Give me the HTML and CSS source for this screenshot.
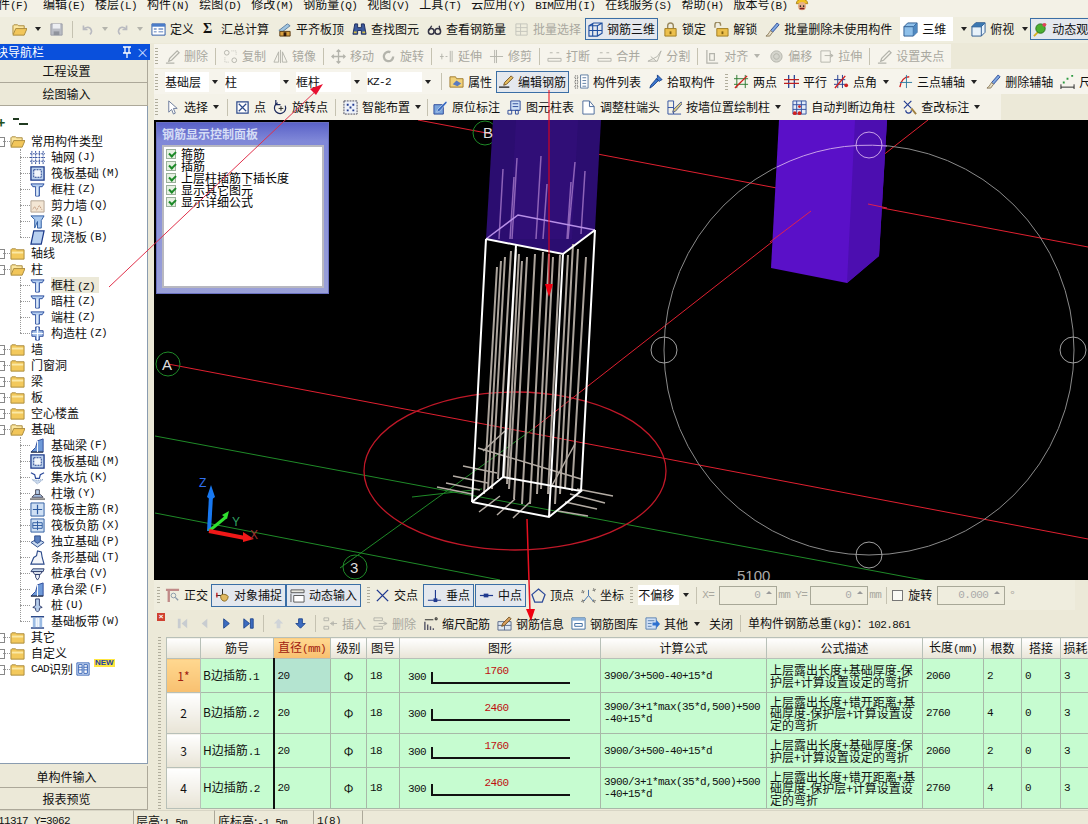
FILE: index.html
```html
<!DOCTYPE html>
<html lang="zh">
<head>
<meta charset="utf-8">
<title>钢筋三维</title>
<link rel="stylesheet" href="styles.css">
</head>
<body>
<svg class="defs" aria-hidden="true">
<symbol id="folder" viewBox="0 0 16 16"><path d="M1 4l1-1h4l1 1h8v10H1z" fill="#f3c95c" stroke="#a98a3c"/><path d="M2 6h12v2H2z" fill="#fbe9a6"/></symbol>
<symbol id="fopen" viewBox="0 0 16 16"><path d="M1 13V4l1-1h4l1 1h6v3" fill="#fbe6a0" stroke="#a98a3c"/><path d="M1 14l3-7h12l-3 7z" fill="#f2c65a" stroke="#a98a3c"/></symbol>
<symbol id="save" viewBox="0 0 16 16"><path d="M2 2h12v12H2z" fill="#b9bcc4" stroke="#9a9da6"/><path d="M4 2h8v5H4z" fill="#eceef2"/><path d="M5 10h6v4H5z" fill="#8f939c"/></symbol>
<symbol id="undo" viewBox="0 0 16 16"><path d="M3 3v5h5M3 8c3-4 9-4 10 2 0 2-1 3-2 4" fill="none" stroke="#b9bac0" stroke-width="2"/></symbol>
<symbol id="redo" viewBox="0 0 16 16"><path d="M13 3v5H8M13 8c-3-4-9-4-10 2 0 2 1 3 2 4" fill="none" stroke="#b9bac0" stroke-width="2"/></symbol>
<symbol id="define" viewBox="0 0 16 16"><path d="M1 2h14v12H1z" fill="#fff" stroke="#2c5aa8"/><path d="M1 2h14v3H1z" fill="#4a7cc8"/><path d="M3 7h3v1H3zM3 10h3v1H3zM8 7h5v1H8zM8 10h5v1H8z" fill="#2c5aa8"/></symbol>
<symbol id="align" viewBox="0 0 16 16"><path d="M2 9l9-7 3 2-9 7z" fill="#9fc4e0" stroke="#5a7ea0"/><path d="M3 10h11v5H3z" fill="#d8a040" stroke="#5a3a10"/><path d="M7 11h3v4H7z" fill="#301808"/></symbol>
<symbol id="binoc" viewBox="0 0 16 16"><path d="M3 2h3v4h4V2h3l2 11h-5V9H6v4H1z" fill="#3c5a9c" stroke="#1c2a5c"/><path d="M2 10h3v2H2zM11 10h3v2h-3z" fill="#d8c040"/></symbol>
<symbol id="glass" viewBox="0 0 16 16"><circle cx="4.5" cy="10" r="3" fill="none" stroke="#334" stroke-width="1.6"/><circle cx="11.5" cy="10" r="3" fill="none" stroke="#334" stroke-width="1.6"/><path d="M2 9l3-5M14 9l-1-5" stroke="#334" stroke-width="1.4"/></symbol>
<symbol id="batch" viewBox="0 0 16 16"><path d="M2 2h12v12H2zM2 6h12M2 10h12M7 2v12" fill="none" stroke="#c4c4bc"/></symbol>
<symbol id="r3d" viewBox="0 0 16 16"><path d="M1 4l5-3h9v11l-5 3H1zM1 4h9v11M10 4l5-3M1 9h14M5 1v14" fill="none" stroke="#1f4fa0" stroke-width="1.2"/></symbol>
<symbol id="lock" viewBox="0 0 16 16"><path d="M5 7V4a3 3 0 0 1 6 0v3" fill="none" stroke="#9a8a60" stroke-width="1.5"/><path d="M2 7h12v8H2z" fill="#ecc04c" stroke="#a07c20"/><path d="M7 10h2v3H7z" fill="#806010"/></symbol>
<symbol id="unlock" viewBox="0 0 16 16"><path d="M1 6V3a3 3 0 0 1 6 0v1" fill="none" stroke="#9a8a60" stroke-width="1.5"/><path d="M3 7h12v8H3z" fill="#ecc04c" stroke="#a07c20"/><path d="M8 10h2v3H8z" fill="#806010"/></symbol>
<symbol id="brush" viewBox="0 0 16 16"><path d="M13 1l2 2-7 8-2-2z" fill="#7fa8e0" stroke="#2c4a9a"/><path d="M6 9l2 2-3 4H1c2-1 3-3 5-6z" fill="#e8e0c8" stroke="#8a7a5a"/></symbol>
<symbol id="cube" viewBox="0 0 16 16"><path d="M1 5l4-4h10v10l-4 4H1z" fill="#8fc0ea" stroke="#2c5a90"/><path d="M1 5h10v10M11 5l4-4" fill="none" stroke="#2c5a90"/><path d="M11 5l4-4v10l-4 4z" fill="#4f88c0"/></symbol>
<symbol id="cube2" viewBox="0 0 16 16"><path d="M1 5l4-4h10v10l-4 4H1z" fill="#e8f2fa" stroke="#2c5a90"/><path d="M1 5h10v10M11 5l4-4M1 5l4-4h10l-4 4z" fill="none" stroke="#2c5a90"/><path d="M1 5l4-4h10l-4 4z" fill="#3c78b0"/></symbol>
<symbol id="dyn" viewBox="0 0 16 16"><path d="M1 15L14 2" stroke="#d8b020" stroke-width="2"/><circle cx="8" cy="7" r="5" fill="#4cb030" stroke="#2c7020"/><circle cx="12" cy="3" r="2" fill="#e04060"/></symbol>
<symbol id="gd" viewBox="0 0 16 16"><path d="M13 2l2 2-8 8-3 1 1-3zM1 15h9" fill="none" stroke="#b4b4ac" stroke-width="1.4"/></symbol>
<symbol id="gcopy" viewBox="0 0 16 16"><circle cx="4" cy="4" r="2.5" fill="none" stroke="#b4b4ac"/><circle cx="12" cy="12" r="2.5" fill="none" stroke="#b4b4ac"/><path d="M9 2l5 0 0 5M2 9v5h5" fill="none" stroke="#c4c4bc" stroke-dasharray="1 1"/></symbol>
<symbol id="gmir" viewBox="0 0 16 16"><path d="M8 1v14M6 3L1 14h5zM10 3l5 11h-5z" fill="none" stroke="#b4b4ac"/></symbol>
<symbol id="gmove" viewBox="0 0 16 16"><path d="M8 1v14M1 8h14M6 3l2-2 2 2M6 13l2 2 2-2M3 6L1 8l2 2M13 6l2 2-2 2" fill="none" stroke="#b4b4ac" stroke-width="1.4"/></symbol>
<symbol id="grot" viewBox="0 0 16 16"><path d="M13 8a5 5 0 1 1-3-4.6" fill="none" stroke="#b4b4ac" stroke-width="2.5"/></symbol>
<symbol id="gext" viewBox="0 0 16 16"><path d="M1 8h4M7 8h2M12 2v12M14 2v12M3 5v6" fill="none" stroke="#b4b4ac"/></symbol>
<symbol id="gtrim" viewBox="0 0 16 16"><path d="M1 8h14M8 1v14M6 1v14" fill="none" stroke="#b4b4ac"/></symbol>
<symbol id="gbrk" viewBox="0 0 16 16"><path d="M3 4h3M10 4h3M1 10h14v3H1z" fill="none" stroke="#b4b4ac"/></symbol>
<symbol id="gsplit" viewBox="0 0 16 16"><path d="M1 13l10-5 4-6M1 13h10l4-11M4 8l6 5" fill="none" stroke="#b4b4ac"/></symbol>
<symbol id="galign" viewBox="0 0 16 16"><path d="M2 1v14h12M5 5h5v7H5z" fill="none" stroke="#b4b4ac" stroke-width="1.3"/></symbol>
<symbol id="goff" viewBox="0 0 16 16"><path d="M8 2a6 6 0 1 1-.1 0zM8 5a3 3 0 1 1-.1 0z" fill="#d4d4cc" stroke="#b4b4ac"/></symbol>
<symbol id="gstr" viewBox="0 0 16 16"><path d="M2 2h10v12H2zM6 7h9M12 5l3 2-3 2" fill="none" stroke="#b4b4ac"/></symbol>
<symbol id="attr" viewBox="0 0 16 16"><path d="M1 3h6l1 2h7v9H1z" fill="#f2d27a" stroke="#a07c30"/><path d="M4 11l4-4 5 3-4 3z" fill="#5a7ac0"/></symbol>
<symbol id="edit" viewBox="0 0 16 16"><path d="M13 2l2 2-7 7-3 1 1-3z" fill="#e8c060" stroke="#705020"/><path d="M0 14h11" stroke="#222" stroke-width="1.4"/></symbol>
<symbol id="list" viewBox="0 0 16 16"><path d="M7 1h8v14H7z" fill="#fff" stroke="#5a7aa0"/><path d="M9 4h4M9 7h4M9 10h4M9 13h4" stroke="#5a7aa0"/><path d="M1 2h3v3H1zM1 7h3v3H1zM1 12h3v3H1z" fill="none" stroke="#555" stroke-dasharray="1 1"/></symbol>
<symbol id="pick" viewBox="0 0 16 16"><path d="M10 1l5 5-2 1-1 1-3-3 1-1zM9 5l2 2-6 6-3 2 1-3z" fill="#3c78d0" stroke="#16408a"/></symbol>
<symbol id="twop" viewBox="0 0 16 16"><path d="M3 1v14M12 1v14M0 5h15M0 11h15" stroke="#2c7a30" fill="none"/><path d="M1 15L14 2" stroke="#d02020" stroke-width="1.5"/></symbol>
<symbol id="para" viewBox="0 0 16 16"><path d="M5 1v14M11 1v14" stroke="#203a90" stroke-width="1.3"/><path d="M0 6h16M0 10h16" stroke="#c02020" stroke-width="1.3"/></symbol>
<symbol id="pang" viewBox="0 0 16 16"><path d="M4 1v14M9 1v14M0 6h12M0 11h12" stroke="#203a90" fill="none"/><path d="M1 15L12 2" stroke="#d02020" stroke-width="1.5"/><circle cx="13" cy="12" r="2" fill="#d02020"/></symbol>
<symbol id="threep" viewBox="0 0 16 16"><path d="M2 14C3 7 7 3 12 3" fill="none" stroke="#d02020" stroke-width="1.5"/><path d="M9 1v14M2 9h13" stroke="#2c7aa0"/></symbol>
<symbol id="dim" viewBox="0 0 16 16"><path d="M1 14h14M1 11v5M15 11v5" stroke="#222"/><path d="M3 8h2v2H3zM7 4h2v2H7zM12 1h2v2h-2z" fill="#2c9a40"/></symbol>
<symbol id="cur" viewBox="0 0 16 16"><path d="M4 1v12l3-3 2 5 2-1-2-5h4z" fill="#fff" stroke="#6a7a9a"/></symbol>
<symbol id="pt" viewBox="0 0 16 16"><path d="M2 2h12v12H2z" fill="#fff" stroke="#2c4a8a" stroke-width="1.3"/><path d="M4 4l8 8M12 4l-8 8" stroke="#2c4a8a" stroke-width="1.3"/></symbol>
<symbol id="rotp" viewBox="0 0 16 16"><path d="M13 6a6 6 0 1 1-8-3" fill="none" stroke="#1c2a5c" stroke-width="1.3"/><path d="M3 0v5h5" fill="none" stroke="#1c2a5c" stroke-width="1.3"/><path d="M6 9h5M8.5 6.500v5" stroke="#222"/></symbol>
<symbol id="smart" viewBox="0 0 16 16"><path d="M1 1h14v14H1z" fill="#eef2f8" stroke="#445" stroke-dasharray="2 1"/><path d="M4 4h2v2H4zM10 4h2v2h-2zM7 7h2v2H7zM4 10h2v2H4zM10 10h2v2h-2z" fill="#203a90"/></symbol>
<symbol id="mark" viewBox="0 0 16 16"><path d="M1 5h10v10H1z" fill="#7aa4dc" stroke="#2c4a9a"/><path d="M14 1l1 2-8 9-3 1 1-3z" fill="#3c6cc0" stroke="#fff" stroke-width=".5"/></symbol>
<symbol id="tab" viewBox="0 0 16 16"><path d="M4 1h10v10H4z" fill="#cfe0f6" stroke="#2c4a9a"/><path d="M6 4h6M6 7h6" stroke="#2c4a9a"/><path d="M1 11h4v4H1zM9 11h3v4H9z" fill="none" stroke="#2c4a9a"/></symbol>
<symbol id="adj" viewBox="0 0 16 16"><path d="M2 1h7l5 6v8H2z" fill="#fff" stroke="#4a6a9a"/><path d="M9 1v6h5" fill="none" stroke="#4a6a9a"/></symbol>
<symbol id="wall" viewBox="0 0 16 16"><path d="M1 1h6v14H1zM1 8h6M7 15h8" fill="none" stroke="#3050a0"/><path d="M15 2l1 2-7 8-3 1 1-3z" fill="#d8c880" stroke="#506090"/></symbol>
<symbol id="corner" viewBox="0 0 16 16"><path d="M1 1h14v14H1zM1 5h14M1 10h14M5 1v14M10 1v14" fill="#e4ecf8" stroke="#3050a0"/><circle cx="3" cy="14" r="2" fill="#d02020"/><circle cx="8" cy="14" r="2" fill="#d02020"/><circle cx="8" cy="7" r="1.500" fill="#d02020"/></symbol>
<symbol id="chk" viewBox="0 0 16 16"><path d="M2 1l8 8M10 1L2 9M4 11a3 3 0 1 0 6 0" fill="none" stroke="#203a90" stroke-width="1.2"/><path d="M10 9l5 6" stroke="#a08040" stroke-width="2"/></symbol>
<symbol id="orth" viewBox="0 0 16 16"><path d="M1 2h14M4 2v13" stroke="#c08a88" stroke-width="2.500" fill="none"/><circle cx="9" cy="8" r="2.500" fill="none" stroke="#8a9aaa"/><path d="M11 10l3 3" stroke="#8a9aaa" stroke-width="1.500"/></symbol>
<symbol id="snap" viewBox="0 0 16 16"><path d="M1 8h12M8 1v8" stroke="#222" fill="none"/><path d="M2 5v5" stroke="#c02020" stroke-width="1.500"/><path d="M6 9c0-3 6-3 8 0 0 3-2 5-4 5s-4-2-4-5z" fill="#e0b860" stroke="#8a6a20"/></symbol>
<symbol id="inp" viewBox="0 0 16 16"><path d="M1 2h14v3H1z" fill="#e8e8e0" stroke="#555"/><path d="M4 8h11v7H4z" fill="#fff" stroke="#555"/><path d="M1 6v9" stroke="#555"/></symbol>
<symbol id="cross" viewBox="0 0 16 16"><path d="M2 2l12 12M14 2L2 14" stroke="#203a90" stroke-width="1.500"/></symbol>
<symbol id="perp" viewBox="0 0 16 16"><path d="M1 13h14M9 2v11" stroke="#203a90" fill="none" stroke-width="1.200"/><path d="M7 11h4v4H7z" fill="#203a90"/></symbol>
<symbol id="mid" viewBox="0 0 16 16"><path d="M1 8h14" stroke="#203a90" stroke-width="1.300"/><path d="M5 6h5v4H5z" fill="#203a90"/></symbol>
<symbol id="vtx" viewBox="0 0 16 16"><path d="M8 1l7 6-3 8H4L1 7z" fill="none" stroke="#2c4a9a" stroke-width="1.300"/></symbol>
<symbol id="crd" viewBox="0 0 16 16"><path d="M3 14L8 8l5 6M8 8V2" fill="none" stroke="#3c70b0"/><path d="M1 3h2v2H1zM13 1h2v2h-2zM1 13h2v2H1zM13 13h2v2h-2z" fill="none" stroke="#333" stroke-dasharray="1 1"/></symbol>
<symbol id="first" viewBox="0 0 16 16"><path d="M3 3h3v10H3zM13 3v10L7 8z" fill="#c8ccd0"/></symbol>
<symbol id="prev" viewBox="0 0 16 16"><path d="M11 3v10L5 8z" fill="#c8ccd0"/></symbol>
<symbol id="next" viewBox="0 0 16 16"><path d="M5 3v10l6-5z" fill="#3c6cc0" stroke="#224a90"/></symbol>
<symbol id="last" viewBox="0 0 16 16"><path d="M3 3v10l6-5zM10 3h3v10h-3z" fill="#3c6cc0" stroke="#224a90"/></symbol>
<symbol id="up" viewBox="0 0 16 16"><path d="M8 3l5 5h-3v5H6V8H3z" fill="#d0d4d8"/></symbol>
<symbol id="down" viewBox="0 0 16 16"><path d="M8 13l5-5h-3V3H6v5H3z" fill="#3c6cc0" stroke="#224a90"/></symbol>
<symbol id="ins" viewBox="0 0 16 16"><path d="M1 2h5v3H1zM1 11h5v3H1zM8 8h7M8 8l3-2v4z" fill="none" stroke="#b4b4ac"/></symbol>
<symbol id="del2" viewBox="0 0 16 16"><path d="M1 2h9v3H1zM1 11h9v3H1zM6 8h9M11 6l4 2-4 2" fill="none" stroke="#b4b4ac"/></symbol>
<symbol id="scale" viewBox="0 0 16 16"><path d="M2 4h9M13 2h2v2h-2z" stroke="#222" fill="none"/><path d="M2 6v9M5 9v6M8 11v4M11 13v2" stroke="#556" stroke-width="1.500"/></symbol>
<symbol id="info" viewBox="0 0 16 16"><path d="M1 6h14v9H1z" fill="#e0e8f0" stroke="#5a6a8a"/><path d="M8 6v9M1 10h14" stroke="#5a6a8a"/><path d="M13 1l2 2-7 7-3 1 1-3z" fill="#d8a060" stroke="#705020"/></symbol>
<symbol id="lib" viewBox="0 0 16 16"><path d="M1 2h14v12H1z" fill="#fff" stroke="#3c6ca0"/><path d="M1 2h14v3H1z" fill="#8ab0d8"/><path d="M4 8h8v3H4z" fill="none" stroke="#3c6ca0"/></symbol>
<symbol id="oth" viewBox="0 0 16 16"><path d="M1 2h11v12H1z" fill="#cfe0f6" stroke="#5a80b0"/><path d="M3 5h7M3 8h4M3 11h4" stroke="#5a80b0"/><path d="M8 7h4V4l4 4.500-4 4.500v-3H8z" fill="#2c70d0"/></symbol>
<symbol id="tgrid" viewBox="0 0 16 16"><path d="M2 1v14M6 1v14M10 1v14M14 1v14M0 4h16M0 8h16M0 12h16" stroke="#2c4a9a" stroke-dasharray="2 1"/></symbol>
<symbol id="traft" viewBox="0 0 16 16"><path d="M1 1h14v14H1z" fill="#bcd2ee" stroke="#1c3a8a" stroke-width="1.400"/><path d="M4 4h8v8H4z" fill="#f2f6fb" stroke="#1c3a8a" stroke-dasharray="2 1"/></symbol>
<symbol id="tcol" viewBox="0 0 16 16"><path d="M1 2h14l-2 3h-3v10H6V5H3z" fill="#b4cef0" stroke="#264a9c"/><path d="M7 5h1v10H7z" fill="#fff"/></symbol>
<symbol id="tshr" viewBox="0 0 16 16"><path d="M1 3h14v12H1z" fill="#f3e6d4" stroke="#b0a090"/><path d="M3 12l2-3 2 4 3-5 3 5" fill="none" stroke="#b08060" stroke-dasharray="1 1"/></symbol>
<symbol id="tbeam" viewBox="0 0 16 16"><path d="M1 2h14l-3 5v8H8V8L5 15V6z" fill="#a8c8ee" stroke="#2c5aa0"/></symbol>
<symbol id="tslab" viewBox="0 0 16 16"><path d="M4 1h11l-3 14H1z" fill="#b8d0f0" stroke="#1c3a8a" stroke-width="1.300"/></symbol>
<symbol id="tgz" viewBox="0 0 16 16"><path d="M6 1h4v4h4v6h-4v4H6v-4H2V5h4z" fill="#a8c4ea" stroke="#2c4a9a"/><path d="M2 8h12M8 1v14" stroke="#fff"/></symbol>
<symbol id="tfb" viewBox="0 0 16 16"><path d="M1 15l5-5 2-7 6-2v14z" fill="#6f9ad8" stroke="#2c4a9a"/><path d="M1 15h13" stroke="#222"/><path d="M8 3v12" stroke="#fff"/></symbol>
<symbol id="tpit" viewBox="0 0 16 16"><path d="M1 3l4 2 1 4h4l1-4 4-2" fill="none" stroke="#2c4a9a" stroke-width="1.300"/><path d="M2 10l6 5 6-5-6 1z" fill="#c8d8ec" stroke="#8aa0c0" stroke-dasharray="1 1"/></symbol>
<symbol id="tdun" viewBox="0 0 16 16"><path d="M0 14h16" stroke="#888" stroke-width="2"/><path d="M2 12h12l-3-3H5z" fill="#a4bee0" stroke="#445"/><path d="M6 9V4h4v5z" fill="#b8d0ec" stroke="#445"/></symbol>
<symbol id="tmain" viewBox="0 0 16 16"><path d="M1 1h14v14H1z" fill="#cfe0f4" stroke="#2c5aa0"/><path d="M8 3v10M3 8h10" stroke="#2c5aa0" stroke-width="1.300"/></symbol>
<symbol id="tneg" viewBox="0 0 16 16"><path d="M1 1h14v14H1z" fill="#cfe0f4" stroke="#2c5aa0"/><path d="M3 5h10v6H3zM8 3v10M3 8h10" fill="none" stroke="#2c5aa0"/></symbol>
<symbol id="tind" viewBox="0 0 16 16"><path d="M1 9l7-4 7 4-7 5z" fill="#c8daf0" stroke="#2c4a8a"/><path d="M5 8V2h6v6l-3 2z" fill="#5a80c0" stroke="#2c4a8a"/></symbol>
<symbol id="tstr" viewBox="0 0 16 16"><path d="M1 15l3-7 3-2 1-5 4 1 1 6 2 7z" fill="#f4f6fa" stroke="#2c4a8a" stroke-width="1.200"/></symbol>
<symbol id="tcap" viewBox="0 0 16 16"><path d="M1 6l2-3h12l-1 3z" fill="#c0d4ec" stroke="#2c3a6a"/><path d="M3 6h10l-2 3H5zM6 9h4v3l-2 3-2-3z" fill="#f0f4fa" stroke="#2c3a6a"/></symbol>
<symbol id="tpile" viewBox="0 0 16 16"><path d="M6 1h4v7l3 2-3 1v2l-2 2-2-2v-2l-3-1 3-2z" fill="#b8cfec" stroke="#2c3a6a"/></symbol>
<symbol id="tband" viewBox="0 0 16 16"><path d="M1 3h14M1 15h14" stroke="#2c4a8a" stroke-width="1.500"/><path d="M3 4h3v10H3zM10 4h3v10h-3z" fill="#9cbce4"/><path d="M7 4h2v10H7z" fill="#dce8f6"/></symbol>
<symbol id="tcad" viewBox="0 0 16 16"><path d="M1 1h14v14H1z" fill="#dce8fa" stroke="#2c5ab0"/><path d="M3 3h4v10H3zM9 3h4v10H9z" fill="#fff" stroke="#2c5ab0"/><path d="M3 6h4M3 9h4M9 6h4M9 9h4" stroke="#2c5ab0"/></symbol>
</svg>

<div class="menu">
<span class="first">文件<span class="m">(F)</span></span><span>编辑<span class="m">(E)</span></span><span>楼层<span class="m">(L)</span></span><span>构件<span class="m">(N)</span></span><span>绘图<span class="m">(D)</span></span><span>修改<span class="m">(M)</span></span><span>钢筋量<span class="m">(Q)</span></span><span>视图<span class="m">(V)</span></span><span>工具<span class="m">(T)</span></span><span>云应用<span class="m">(Y)</span></span><span><span class="m">BIM</span>应用<span class="m">(I)</span></span><span>在线服务<span class="m">(S)</span></span><span>帮助<span class="m">(H)</span></span><span>版本号<span class="m">(B)</span></span>
<svg class="avatar" viewBox="0 0 16 16"><path d="M1 7a7 6 0 0 1 14 0z" fill="#f0c020" stroke="#a07810"/><circle cx="8" cy="10" r="5" fill="#e8b088"/><circle cx="6" cy="10" r="1" fill="#222"/><circle cx="10" cy="10" r="1" fill="#222"/><path d="M5 13h6" stroke="#802020" stroke-width="2"/></svg>
</div>

<div class="bar1">
<svg class="ic"><use href="#fopen"/></svg><i class="dd"></i>
<svg class="ic"><use href="#save"/></svg><i class="sep"></i>
<svg class="ic ic12"><use href="#undo"/></svg><i class="dd dis"></i>
<svg class="ic ic12"><use href="#redo"/></svg><i class="dd dis"></i>
<span class="it"><svg class="ic"><use href="#define"/></svg>定义</span>
<span class="it"><b class="sig">Σ</b>汇总计算</span>
<span class="it"><svg class="ic"><use href="#align"/></svg>平齐板顶</span>
<span class="it"><svg class="ic"><use href="#binoc"/></svg>查找图元</span>
<span class="it"><svg class="ic"><use href="#glass"/></svg>查看钢筋量</span>
<span class="it off"><svg class="ic"><use href="#batch"/></svg>批量选择</span>
<span class="it on"><svg class="ic"><use href="#r3d"/></svg>钢筋三维</span>
<span class="it"><svg class="ic"><use href="#lock"/></svg>锁定</span>
<span class="it"><svg class="ic"><use href="#unlock"/></svg>解锁</span>
<span class="it"><svg class="ic"><use href="#brush"/></svg>批量删除未使用构件</span>
<span class="it white"><svg class="ic"><use href="#cube"/></svg>三维</span><i class="dd"></i>
<span class="it top"><svg class="ic"><use href="#cube2"/></svg>俯视</span><i class="dd"></i>
<span class="it on dynb"><svg class="ic"><use href="#dyn"/></svg>动态观察</span>
</div>

<div class="main">
<aside class="side">
<div class="nav-head"><span class="nav-title">模块导航栏</span><svg class="nav-pin" viewBox="0 0 14 12"><path d="M1 1h8M3 1v6M7 1v6M1 7h8M5 7v5" fill="none" stroke="#fff" stroke-width="1.300"/></svg><span class="nav-x">×</span></div>
<div class="navbtn first-btn">工程设置</div>
<div class="navbtn">绘图输入</div>
<div class="tree">
<div class="treetools"><b>+</b><i class="tt"></i></div>
<div class="node"><svg class="ic"><use href="#fopen"/></svg>常用构件类型</div>
<div class="kids">
<div class="leaf"><svg class="ic"><use href="#tgrid"/></svg>轴网<span class="m">(J)</span></div>
<div class="leaf"><svg class="ic"><use href="#traft"/></svg>筏板基础<span class="m">(M)</span></div>
<div class="leaf"><svg class="ic"><use href="#tcol"/></svg>框柱<span class="m">(Z)</span></div>
<div class="leaf"><svg class="ic"><use href="#tshr"/></svg>剪力墙<span class="m">(Q)</span></div>
<div class="leaf"><svg class="ic"><use href="#tbeam"/></svg>梁<span class="m">(L)</span></div>
<div class="leaf"><svg class="ic"><use href="#tslab"/></svg>现浇板<span class="m">(B)</span></div>
</div>
<div class="node"><svg class="ic"><use href="#folder"/></svg>轴线</div>
<div class="node"><svg class="ic"><use href="#fopen"/></svg>柱</div>
<div class="kids">
<div class="leaf"><svg class="ic"><use href="#tcol"/></svg><span class="sel">框柱<span class="m">(Z)</span></span></div>
<div class="leaf"><svg class="ic"><use href="#tcol"/></svg>暗柱<span class="m">(Z)</span></div>
<div class="leaf"><svg class="ic"><use href="#tcol"/></svg>端柱<span class="m">(Z)</span></div>
<div class="leaf"><svg class="ic"><use href="#tgz"/></svg>构造柱<span class="m">(Z)</span></div>
</div>
<div class="node"><svg class="ic"><use href="#folder"/></svg>墙</div>
<div class="node"><svg class="ic"><use href="#folder"/></svg>门窗洞</div>
<div class="node"><svg class="ic"><use href="#folder"/></svg>梁</div>
<div class="node"><svg class="ic"><use href="#folder"/></svg>板</div>
<div class="node"><svg class="ic"><use href="#folder"/></svg>空心楼盖</div>
<div class="node"><svg class="ic"><use href="#fopen"/></svg>基础</div>
<div class="kids">
<div class="leaf"><svg class="ic"><use href="#tfb"/></svg>基础梁<span class="m">(F)</span></div>
<div class="leaf"><svg class="ic"><use href="#traft"/></svg>筏板基础<span class="m">(M)</span></div>
<div class="leaf"><svg class="ic"><use href="#tpit"/></svg>集水坑<span class="m">(K)</span></div>
<div class="leaf"><svg class="ic"><use href="#tdun"/></svg>柱墩<span class="m">(Y)</span></div>
<div class="leaf"><svg class="ic"><use href="#tmain"/></svg>筏板主筋<span class="m">(R)</span></div>
<div class="leaf"><svg class="ic"><use href="#tneg"/></svg>筏板负筋<span class="m">(X)</span></div>
<div class="leaf"><svg class="ic"><use href="#tind"/></svg>独立基础<span class="m">(P)</span></div>
<div class="leaf"><svg class="ic"><use href="#tstr"/></svg>条形基础<span class="m">(T)</span></div>
<div class="leaf"><svg class="ic"><use href="#tcap"/></svg>桩承台<span class="m">(V)</span></div>
<div class="leaf"><svg class="ic"><use href="#tfb"/></svg>承台梁<span class="m">(F)</span></div>
<div class="leaf"><svg class="ic"><use href="#tpile"/></svg>桩<span class="m">(U)</span></div>
<div class="leaf"><svg class="ic"><use href="#tband"/></svg>基础板带<span class="m">(W)</span></div>
</div>
<div class="node"><svg class="ic"><use href="#folder"/></svg>其它</div>
<div class="node"><svg class="ic"><use href="#folder"/></svg>自定义</div>
<div class="node cad"><svg class="ic"><use href="#folder"/></svg><span class="m">CAD</span>识别<svg class="ic cadi"><use href="#tcad"/></svg><em class="new">NEW</em></div>
</div>
<div class="navbtn foot">单构件输入</div>
<div class="navbtn foot">报表预览</div>
</aside>

<section class="work">
<div class="tb tb2 strip off">
<i class="grip"></i>
<span class="it"><svg class="ic"><use href="#gd"/></svg>删除</span><i class="sep"></i>
<span class="it"><svg class="ic"><use href="#gcopy"/></svg>复制</span>
<span class="it"><svg class="ic"><use href="#gmir"/></svg>镜像</span><i class="sep"></i>
<span class="it"><svg class="ic"><use href="#gmove"/></svg>移动</span>
<span class="it"><svg class="ic"><use href="#grot"/></svg>旋转</span><i class="sep"></i>
<span class="it"><svg class="ic"><use href="#gext"/></svg>延伸</span>
<span class="it"><svg class="ic"><use href="#gtrim"/></svg>修剪</span><i class="sep"></i>
<span class="it"><svg class="ic"><use href="#gbrk"/></svg>打断</span>
<span class="it"><svg class="ic"><use href="#gbrk"/></svg>合并</span>
<span class="it"><svg class="ic"><use href="#gsplit"/></svg>分割</span><i class="sep"></i>
<span class="it"><svg class="ic"><use href="#galign"/></svg>对齐<i class="dd dis"></i></span>
<span class="it"><svg class="ic"><use href="#goff"/></svg>偏移</span>
<span class="it"><svg class="ic"><use href="#gstr"/></svg>拉伸</span><i class="sep"></i>
<span class="it"><svg class="ic"><use href="#gd"/></svg>设置夹点</span>
</div>
<div class="tb tb3 strip">
<i class="grip"></i>
<span class="sel-box w48">基础层</span><i class="dd"></i>
<span class="sel-box w58">柱</span><i class="dd"></i>
<span class="sel-box w58">框柱</span><i class="dd"></i>
<span class="sel-box w58 m">KZ-2</span><i class="dd"></i><i class="sep"></i>
<span class="it"><svg class="ic"><use href="#attr"/></svg>属性</span>
<span class="it on"><svg class="ic"><use href="#edit"/></svg>编辑钢筋</span>
<span class="it"><svg class="ic"><use href="#list"/></svg>构件列表</span>
<span class="it"><svg class="ic"><use href="#pick"/></svg>拾取构件</span>
<i class="grip g8"></i>
<span class="it"><svg class="ic"><use href="#twop"/></svg>两点</span>
<span class="it"><svg class="ic"><use href="#para"/></svg>平行</span>
<span class="it"><svg class="ic"><use href="#pang"/></svg>点角<i class="dd"></i></span>
<span class="it"><svg class="ic"><use href="#threep"/></svg>三点辅轴<i class="dd"></i></span>
<span class="it"><svg class="ic"><use href="#brush"/></svg>删除辅轴</span>
<span class="it"><svg class="ic"><use href="#dim"/></svg>尺寸标注</span>
</div>
<div class="tb tb4 strip">
<i class="grip"></i>
<span class="it"><svg class="ic"><use href="#cur"/></svg>选择<i class="dd"></i></span><i class="sep"></i>
<span class="it"><svg class="ic"><use href="#pt"/></svg>点</span>
<span class="it"><svg class="ic"><use href="#rotp"/></svg>旋转点</span><i class="sep"></i>
<span class="it"><svg class="ic"><use href="#smart"/></svg>智能布置<i class="dd"></i></span><i class="sep pull"></i>
<span class="it"><svg class="ic"><use href="#mark"/></svg>原位标注</span>
<span class="it"><svg class="ic"><use href="#tab"/></svg>图元柱表</span>
<span class="it"><svg class="ic"><use href="#adj"/></svg>调整柱端头</span>
<span class="it"><svg class="ic"><use href="#wall"/></svg>按墙位置绘制柱<i class="dd"></i></span>
<span class="it nudge"><svg class="ic"><use href="#corner"/></svg>自动判断边角柱</span>
<span class="it"><svg class="ic"><use href="#chk"/></svg>查改标注<i class="dd"></i></span>
</div>

<div class="canvas">
<svg class="scene" viewBox="154 121 934 460">
<g fill="none">
<path d="M418 121L1088 248M168 365L1088 540M533 430L928 121" stroke="#e02030"/>
<path d="M155 437L1088 612M155 514L500 581M340 569L533 430M412 498L482 490" stroke="#1f8a28"/>
<ellipse cx="515" cy="472" rx="151" ry="79" stroke="#c01828" stroke-width="1.300"/>
<circle cx="869" cy="351" r="205" stroke="#8a8a8a"/>
<circle cx="664" cy="351" r="13" stroke="#a0a0a0"/>
<circle cx="1073" cy="351" r="13" stroke="#a0a0a0"/>
<circle cx="869" cy="556" r="13" stroke="#a0a0a0"/>
<circle cx="485" cy="134" r="12" stroke="#1f8a28"/>
<circle cx="168" cy="365" r="12" stroke="#1f8a28"/>
<circle cx="355" cy="568" r="12" stroke="#1f8a28"/>
<path d="M779 121H887L879 257 847 284 771 269z" fill="#5a10c8"/>
<path d="M855 121H887L879 257 847 284z" fill="#4c0eb0"/>
<path d="M770 243L811 212M868 205L887 209" stroke="#e02050"/>
<path d="M777 168A205 205 0 0 1 887 147" stroke="#c8a0e8"/>
<circle cx="869" cy="146" r="13" stroke="#c8a0e8"/>
<path d="M493 121H601L595 231 563 255 486 240z" fill="#2b0d70"/>
<path d="M516 121H578L572 240 510 240z" fill="#33107a" opacity=".7"/>
<path d="M517 159L512 240M541 157L536 240M575 163L568 240M503 170L499 240M514 178L510 240M547 185L543 240M571 183L567 240M585 172L581 235" stroke="#8d63b8" stroke-width="1.500"/>
<path d="M497 268L484 495M501 262L488 490M505 258L492 490M511 252L498 480M516 250L504 478M519 255L507 485M522 262L509 490M527 258L514 500M535 255L522 505M543 253L530 505M549 255L537 495M553 258L541 490M560 256L548 495M568 256L555 505M573 245L560 495M578 250L565 490M586 258L572 492" stroke="#aca49c" stroke-width="2"/>
<path d="M463 467L497 474M453 477L488 484M446 484L480 491M437 488L472 495M577 490L613 497M570 495L605 504M565 503L597 510M558 512L588 517M479 513L500 497M497 516L515 500M513 519L530 503M478 449L581 480M483 452L505 432M550 490L575 445" stroke="#b4aca4" stroke-width="1.500"/>
<path d="M486 240L518 216 595 231" stroke="#b890e8" stroke-width="1.500"/>
<path d="M516 246L503 478M486 240L472 503M563 255L549 518M595 231L581 492M486 240L563 255 595 231M472 503L549 518 581 492 503 478 472 503" stroke="#fff" stroke-width="2"/>
<path d="M209 532L211 497" stroke="#1878f0" stroke-width="4"/><path d="M207 498l4-12 4 12-4 3z" fill="#1878f0"/>
<path d="M209 532L226 518" stroke="#30e030" stroke-width="3"/><path d="M222 516l7-4-2 8z" fill="#30e030"/>
<path d="M209 532L245 539" stroke="#f01818" stroke-width="4"/><path d="M243 533l11 7-11 3z" fill="#f01818"/>
</g>
<g class="scene-t">
<text x="483" y="139">B</text><text x="162" y="371">A</text><text x="350" y="574">3</text>
<text class="dimt" x="737" y="582">5100</text>
<text class="zt" x="199" y="488">Z</text><text class="yt" x="232" y="527">Y</text><text class="xt" x="250" y="540">X</text>
</g>
</svg>
<div class="panel">
<div class="panel-title">钢筋显示控制面板</div>
<div class="panel-body">
<label class="chk"><i class="cb"></i>箍筋</label>
<label class="chk"><i class="cb"></i>插筋</label>
<label class="chk"><i class="cb"></i>上层柱插筋下插长度</label>
<label class="chk"><i class="cb"></i>显示其它图元</label>
<label class="chk"><i class="cb"></i>显示详细公式</label>
</div>
</div>
</div>

<div class="tb snapbar">
<i class="grip"></i>
<span class="it"><svg class="ic"><use href="#orth"/></svg>正交</span>
<span class="btngroup"><span class="it on"><svg class="ic"><use href="#snap"/></svg>对象捕捉</span><span class="it on"><svg class="ic"><use href="#inp"/></svg>动态输入</span></span>
<i class="grip"></i>
<span class="it"><svg class="ic"><use href="#cross"/></svg>交点</span>
<span class="btngroup second"><span class="it on"><svg class="ic"><use href="#perp"/></svg>垂点</span><span class="it on"><svg class="ic"><use href="#mid"/></svg>中点</span></span>
<span class="it"><svg class="ic"><use href="#vtx"/></svg>顶点</span>
<span class="it crdit"><svg class="ic"><use href="#crd"/></svg>坐标</span>
<i class="grip"></i>
<span class="sel-box w48">不偏移</span><i class="dd"></i><i class="sep"></i>
<span class="off m lbl">X=</span><span class="num w58">0<i class="spin"></i></span><span class="off m lbl mmx">mm</span>
<span class="off m lbl">Y=</span><span class="num w58 ynum">0<i class="spin"></i></span><span class="off m lbl mmx">mm</span><i class="sep"></i>
<i class="box"></i><span>旋转</span><span class="num w68">0.000<i class="spin"></i></span><span class="off">°</span>
</div>

<div class="tb infobar">
<i class="close">×</i>
<svg class="ic"><use href="#first"/></svg><svg class="ic"><use href="#prev"/></svg><svg class="ic"><use href="#next"/></svg><svg class="ic"><use href="#last"/></svg><i class="sep"></i>
<svg class="ic"><use href="#up"/></svg><svg class="ic"><use href="#down"/></svg><i class="sep"></i>
<span class="it off"><svg class="ic"><use href="#ins"/></svg>插入</span>
<span class="it off"><svg class="ic"><use href="#del2"/></svg>删除</span>
<span class="it"><svg class="ic"><use href="#scale"/></svg>缩尺配筋</span>
<span class="it"><svg class="ic"><use href="#info"/></svg>钢筋信息</span>
<span class="it"><svg class="ic"><use href="#lib"/></svg>钢筋图库</span>
<span class="it"><svg class="ic"><use href="#oth"/></svg>其他<i class="dd"></i></span>
<span>关闭</span><i class="sep"></i>
<span>单构件钢筋总重<span class="m">(kg)</span>：<span class="m">102.861</span></span>
</div>

<div class="gridwrap">
<i class="vgrip"></i>
<table class="grid">
<colgroup><col class="c0"><col class="c1"><col class="c2"><col class="c3"><col class="c4"><col class="c5"><col class="c6"><col class="c7"><col class="c8"><col class="c9"><col class="c10"><col class="c11"></colgroup>
<thead><tr><th></th><th>筋号</th><th class="hot">直径<span class="m">(mm)</span></th><th>级别</th><th>图号</th><th>图形</th><th>计算公式</th><th>公式描述</th><th>长度<span class="m">(mm)</span></th><th>根数</th><th>搭接</th><th>损耗</th></tr></thead>
<tbody>
<tr class="r33"><th class="hot rn">1*</th><td class="b">B边插筋<span class="m">.1</span></td><td class="m cur">20</td><td class="ctr">Φ</td><td class="m">18</td><td><div class="fig"><span class="m">300</span><div class="bar"><span class="m">1760</span></div></div></td><td class="m">3900/3+500-40+15*d</td><td class="desc">上层露出长度+基础厚度-保<br>护层+计算设置设定的弯折</td><td class="m">2060</td><td class="m">2</td><td class="m">0</td><td class="m">3</td></tr>
<tr class="r41"><th class="rn">2</th><td class="b">B边插筋<span class="m">.2</span></td><td class="m">20</td><td class="ctr">Φ</td><td class="m">18</td><td><div class="fig"><span class="m">300</span><div class="bar"><span class="m">2460</span></div></div></td><td class="m">3900/3+1*max(35*d,500)+500<br>-40+15*d</td><td class="desc">上层露出长度+错开距离+基<br>础厚度-保护层+计算设置设<br>定的弯折</td><td class="m">2760</td><td class="m">4</td><td class="m">0</td><td class="m">3</td></tr>
<tr class="r33"><th class="rn">3</th><td class="b">H边插筋<span class="m">.1</span></td><td class="m">20</td><td class="ctr">Φ</td><td class="m">18</td><td><div class="fig"><span class="m">300</span><div class="bar"><span class="m">1760</span></div></div></td><td class="m">3900/3+500-40+15*d</td><td class="desc">上层露出长度+基础厚度-保<br>护层+计算设置设定的弯折</td><td class="m">2060</td><td class="m">2</td><td class="m">0</td><td class="m">3</td></tr>
<tr class="r41"><th class="rn">4</th><td class="b">H边插筋<span class="m">.2</span></td><td class="m">20</td><td class="ctr">Φ</td><td class="m">18</td><td><div class="fig"><span class="m">300</span><div class="bar"><span class="m">2460</span></div></div></td><td class="m">3900/3+1*max(35*d,500)+500<br>-40+15*d</td><td class="desc">上层露出长度+错开距离+基<br>础厚度-保护层+计算设置设<br>定的弯折</td><td class="m">2760</td><td class="m">4</td><td class="m">0</td><td class="m">3</td></tr>
</tbody>
</table>
</div>
</section>
</div>

<div class="status">
<span class="s0 m">X=11317 Y=3062</span><span class="s1">层高:<span class="m">1.5m</span></span><span class="s2">底标高:<span class="m">-1.5m</span></span><span class="s3 m">1(8)</span><span class="s4"></span>
</div>

<svg class="arrows" viewBox="0 0 1088 824">
<path d="M109 287L318 89" stroke="#e0304a" fill="none"/><path d="M323 84l-13 5 6 6z" fill="#e81030"/>
<path d="M549 90V290" stroke="#f00010" fill="none"/><path d="M545 284h8l-4 13z" fill="#f00010"/>
<path d="M527 519L530 612" stroke="#e81020" stroke-width="1.500" fill="none"/><path d="M526 609h9l-4 12z" fill="#f00010"/>
</svg>
</body>
</html>
```
FILE: styles.css
```css
*{box-sizing:border-box}
html,body{margin:0;height:824px;width:1088px;overflow:hidden}
body{position:relative;background:#ece9d8;color:#111;font:12px/14px "Noto Sans CJK SC","Liberation Sans",sans-serif;display:flex;flex-direction:column}
i,em{font-style:normal}
.defs{position:absolute;width:0;height:0}
.m{font-family:"Liberation Mono",monospace;font-size:11px;letter-spacing:-.6px}
.ic{width:15px;height:15px;flex:none;display:block}
.ic12{width:13px}

.menu{flex:none;display:flex;align-items:flex-start;background:#f3f1e6;gap:10px;overflow:hidden;margin-top:-2px;height:19px;white-space:nowrap}
.menu .first{margin-left:-14px;margin-right:5px}
.menu>span{flex:none;line-height:14px;margin-top:-1px}
.avatar{width:16px;height:13px;margin-left:-3px}

.bar1{height:26px;flex:none;display:flex;align-items:center;gap:8px;padding:0 0 2px 12px;white-space:nowrap;background:#efedde;overflow:hidden}
.bar1 .dd{margin:0}
.bar1 .on{margin:0 -3px 0 -4px}
.bar1 .top{margin-left:-4px}
.bar1 .dynb{margin-left:-6px}
.it{display:inline-flex;align-items:center;gap:4px;flex:none;white-space:nowrap}
.sig{width:11px;text-align:center;font-weight:bold;font-family:"Liberation Serif",serif;font-size:14px;margin-right:4px}
.off{color:#a9a89f}
.on{border:1px solid #3a6ea5;background:#e4e8ee;height:22px;padding:0 2px}
.white{background:#fff;height:24px;padding:0 7px 0 3px}
.dd{display:inline-block;flex:none;width:0;height:0;border:3px solid transparent;border-top:4px solid #222;border-bottom:0;margin:0 2px}
.dd.dis{border-top-color:#b4b4ac}
.sep{flex:none;width:1px;height:17px;background:#c5c2b1}

.main{flex:1;min-height:0;display:flex}
.side{width:154px;flex:none;display:flex;flex-direction:column;padding:1px 6px 0 0}
.nav-head{height:16px;width:150px;flex:none;background:#0a50dc;color:#fff;display:flex;align-items:center;overflow:hidden;line-height:14px}
.nav-title{margin-left:-16px;flex:none;width:138px}
.nav-pin{flex:none;width:14px;height:12px}
.nav-x{flex:none;font-size:13px;color:#c8d8ff}
.navbtn{height:23px;flex:none;text-align:center;line-height:22px;padding-right:14px;background:#ece9d8;border-bottom:1px solid #aca899;border-right:1px solid #aca899}
.foot{height:22px}
.tree{flex:1;background:#fff;border-right:1px solid #8a9cb0;border-bottom:1px solid #8a9cb0;min-height:0;margin-bottom:2px;overflow:hidden}
.treetools{height:27px;display:flex;align-items:center;padding-top:4px;gap:8px;margin-left:-3px}
.treetools b{color:#205020;font-size:14px}
.tt{width:16px;height:8px;background:linear-gradient(#203a20,#203a20) 0 0/6px 2px no-repeat,linear-gradient(#203a20,#203a20) 6px 5px/9px 2px no-repeat}
.node,.leaf{height:16px;display:flex;align-items:center;white-space:nowrap;position:relative}
.node .ic,.leaf>.ic{margin-right:6px}
.leaf .m{margin-left:2px}
.node{padding-left:10px}
.node::before{content:"";position:absolute;left:-5px;top:4px;width:8px;height:8px;border:1px solid #888;background:#fff}
.node::after{content:"";position:absolute;left:3px;top:8px;width:7px;border-top:1px dotted #999}
.kids{position:relative;padding-left:30px}
.kids::before{content:"";position:absolute;left:20px;top:0;bottom:8px;border-left:1px dotted #999}
.leaf::before{content:"";position:absolute;left:-10px;top:8px;width:10px;border-top:1px dotted #999}
.sel{background:#ece9d8;padding:0 4px 0 0;height:16px;line-height:16px}
.node .cadi{width:14px;height:14px;margin:0 0 0 3px}
.new{position:absolute;left:94px;top:-2px;background:#ffe640;color:#2040a0;font:bold 8px/8px "Liberation Sans",sans-serif;padding:0 1px}

.work{flex:1;min-width:0;display:flex;flex-direction:column;overflow:hidden}
.tb{display:flex;align-items:center;gap:8px;flex:none;white-space:nowrap}
.strip{background:#f6f4ec;width:max-content}
.tb2{height:24px;margin:1px 0;padding-right:7px;gap:7px}
.tb3{height:25px;width:100%;gap:7px;overflow:hidden}
.tb3>.dd{margin:0}
.tb3>.sep{margin-left:3px}
.tb3 .on{margin:0 -2px 0 -3px}
.tb3 .sel-box{margin-right:-4px}
.tb4{height:26px;gap:7px;padding-right:20px;background:#f4f2e8}
.tb4 .dd{margin:0 1px}
.tb4 .pull{margin-left:-2px;margin-right:-2px}
.tb4 .nudge{margin-left:3px}
.grip{flex:none;width:3px;height:16px;background:repeating-linear-gradient(#b0ad9c 0 1px,transparent 1px 3px);margin-left:1px}
.g8{margin:0 -1px 0 3px}
.sel-box{background:#fff;display:inline-block;height:20px;line-height:20px;flex:none;margin-right:-3px}
.w48{width:44px}
.w58{width:55px}
.w68{width:68px}

.canvas{height:460px;flex:none;position:relative;background:#000;overflow:hidden}
.scene{display:block;width:934px;height:460px}
.scene-t{font:15px "Liberation Sans",sans-serif;fill:#ddd}
.dimt{fill:#aaa}
.zt,.yt,.xt{font-size:12px}
.zt{fill:#3070f0}.yt{fill:#30a060}.xt{fill:#a03030}
.panel{position:absolute;left:2px;top:2px;width:173px;height:172px;background:linear-gradient(#5a62c8,#8088d8 18px,#9aa0d8);padding:0 4px 5px 5px;display:flex;flex-direction:column;border:1px solid #6a70c0}
.panel-title{height:22px;line-height:22px;font-weight:bold;color:#d5dcf5;flex:none}
.panel-body{flex:1;background:#fff;border:2px solid #b8b8c0;padding:1px 0 0 2px}
.chk{display:flex;align-items:center;gap:5px;height:12px;line-height:12px;white-space:nowrap;color:#000}
.cb{width:10px;height:10px;flex:none;border:1px solid #9ab09a;background:#e6f0e2;position:relative}
.cb::after{content:"";position:absolute;left:2px;top:1px;width:5px;height:3px;border-left:2px solid #1c8a28;border-bottom:2px solid #1c8a28;transform:rotate(-45deg)}

.snapbar{height:30px;gap:5px;padding:0 60px 0 2px;width:max-content;background:#efedde}
.btngroup{display:inline-flex;flex:none;margin-left:-2px}
.snapbar .second{margin-left:0;gap:1px}
.snapbar .on{padding:0 3px;height:23px}
.snapbar .crdit{margin-left:2px}
.snapbar .w48{width:41px}
.snapbar .mmx{margin-left:-4px}
.snapbar .ynum{margin-left:-2px}
.lbl{flex:none}
.num{display:inline-flex;align-items:center;justify-content:flex-end;height:19px;border:1px solid #a8a898;color:#aaa;flex:none;padding-right:16px;position:relative;font:11px "Liberation Mono",monospace;letter-spacing:-.6px}
.snapbar .w58{width:58px}
.spin{position:absolute;right:4px;top:4px;border:3px solid transparent;border-bottom:3px solid #999;border-top:0;width:0;height:0}
.box{width:11px;height:11px;border:1px solid #777;flex:none;background:#fafaf5}

.infobar{height:27px;gap:7px;padding-left:3px}
.close{flex:none;width:8px;height:8px;background:#d04030;color:#fff;font:bold 8px/8px "Liberation Sans",sans-serif;text-align:center;margin-right:3px;margin-top:-14px}

.gridwrap{display:flex;flex:none;height:172px;padding-left:4px;overflow:hidden}
.vgrip{flex:none;width:3px;margin-right:5px;background:repeating-linear-gradient(#b0ad9c 0 1px,transparent 1px 3px)}
.grid{border-collapse:collapse;table-layout:fixed;width:924px;flex:none;background:#c6fcd0;border:1px solid #8aa4b8;border-right:0}
.c0{width:34px}.c1{width:73px}.c2{width:57px}.c3{width:36px}.c4{width:33px}.c5{width:201px}.c6{width:166px}.c7{width:156px}.c8{width:61px}.c9{width:38px}.c10{width:39px}.c11{width:30px}
.grid thead tr{height:21px}
.grid th{background:linear-gradient(#fff,#e8e4d6);font-weight:normal;border:1px solid #b8c0b8;padding:0;text-align:center;white-space:nowrap;overflow:hidden}
.grid th.hot{background:linear-gradient(#ffd890,#f8c070);color:#a02010}
.grid td{border:1px solid #a8b8a8;padding:0 0 0 3px;white-space:nowrap;overflow:hidden;line-height:12px}
.grid td.b{border-right:2px solid #111;padding-left:2px}
.grid td.cur{background:#b4e4d0}
.grid td.ctr{text-align:center;padding:0}
.r33{height:34px}.r41{height:41px}
.grid td.desc{line-height:11.500px}
.fig{display:flex;align-items:flex-end;padding-left:5px;gap:5px;height:16px}
.fig>.m{line-height:13px}
.bar{width:139px;height:12px;padding-right:10px;border-left:2px solid #111;border-bottom:2px solid #111;text-align:center;color:#c01010;line-height:8px}
.bar .m{position:relative;top:-7px}

.status{height:14px;flex:none;display:flex;overflow:hidden;line-height:20px;background:#ece9d8;white-space:nowrap}
.status span{flex:none}
.status>span{border-left:1px solid #aca899;border-top:1px solid #d8d5c5;height:14px}
.status>.s0{width:147px;margin-left:-14px;border-left:0}
.s1{width:81px;padding-left:2px}
.s2{width:99px;padding-left:3px}
.s3{width:49px;padding-left:3px}
.status>.s4{flex:1}
.arrows{position:absolute;left:0;top:0;width:1088px;height:824px;pointer-events:none}
```
